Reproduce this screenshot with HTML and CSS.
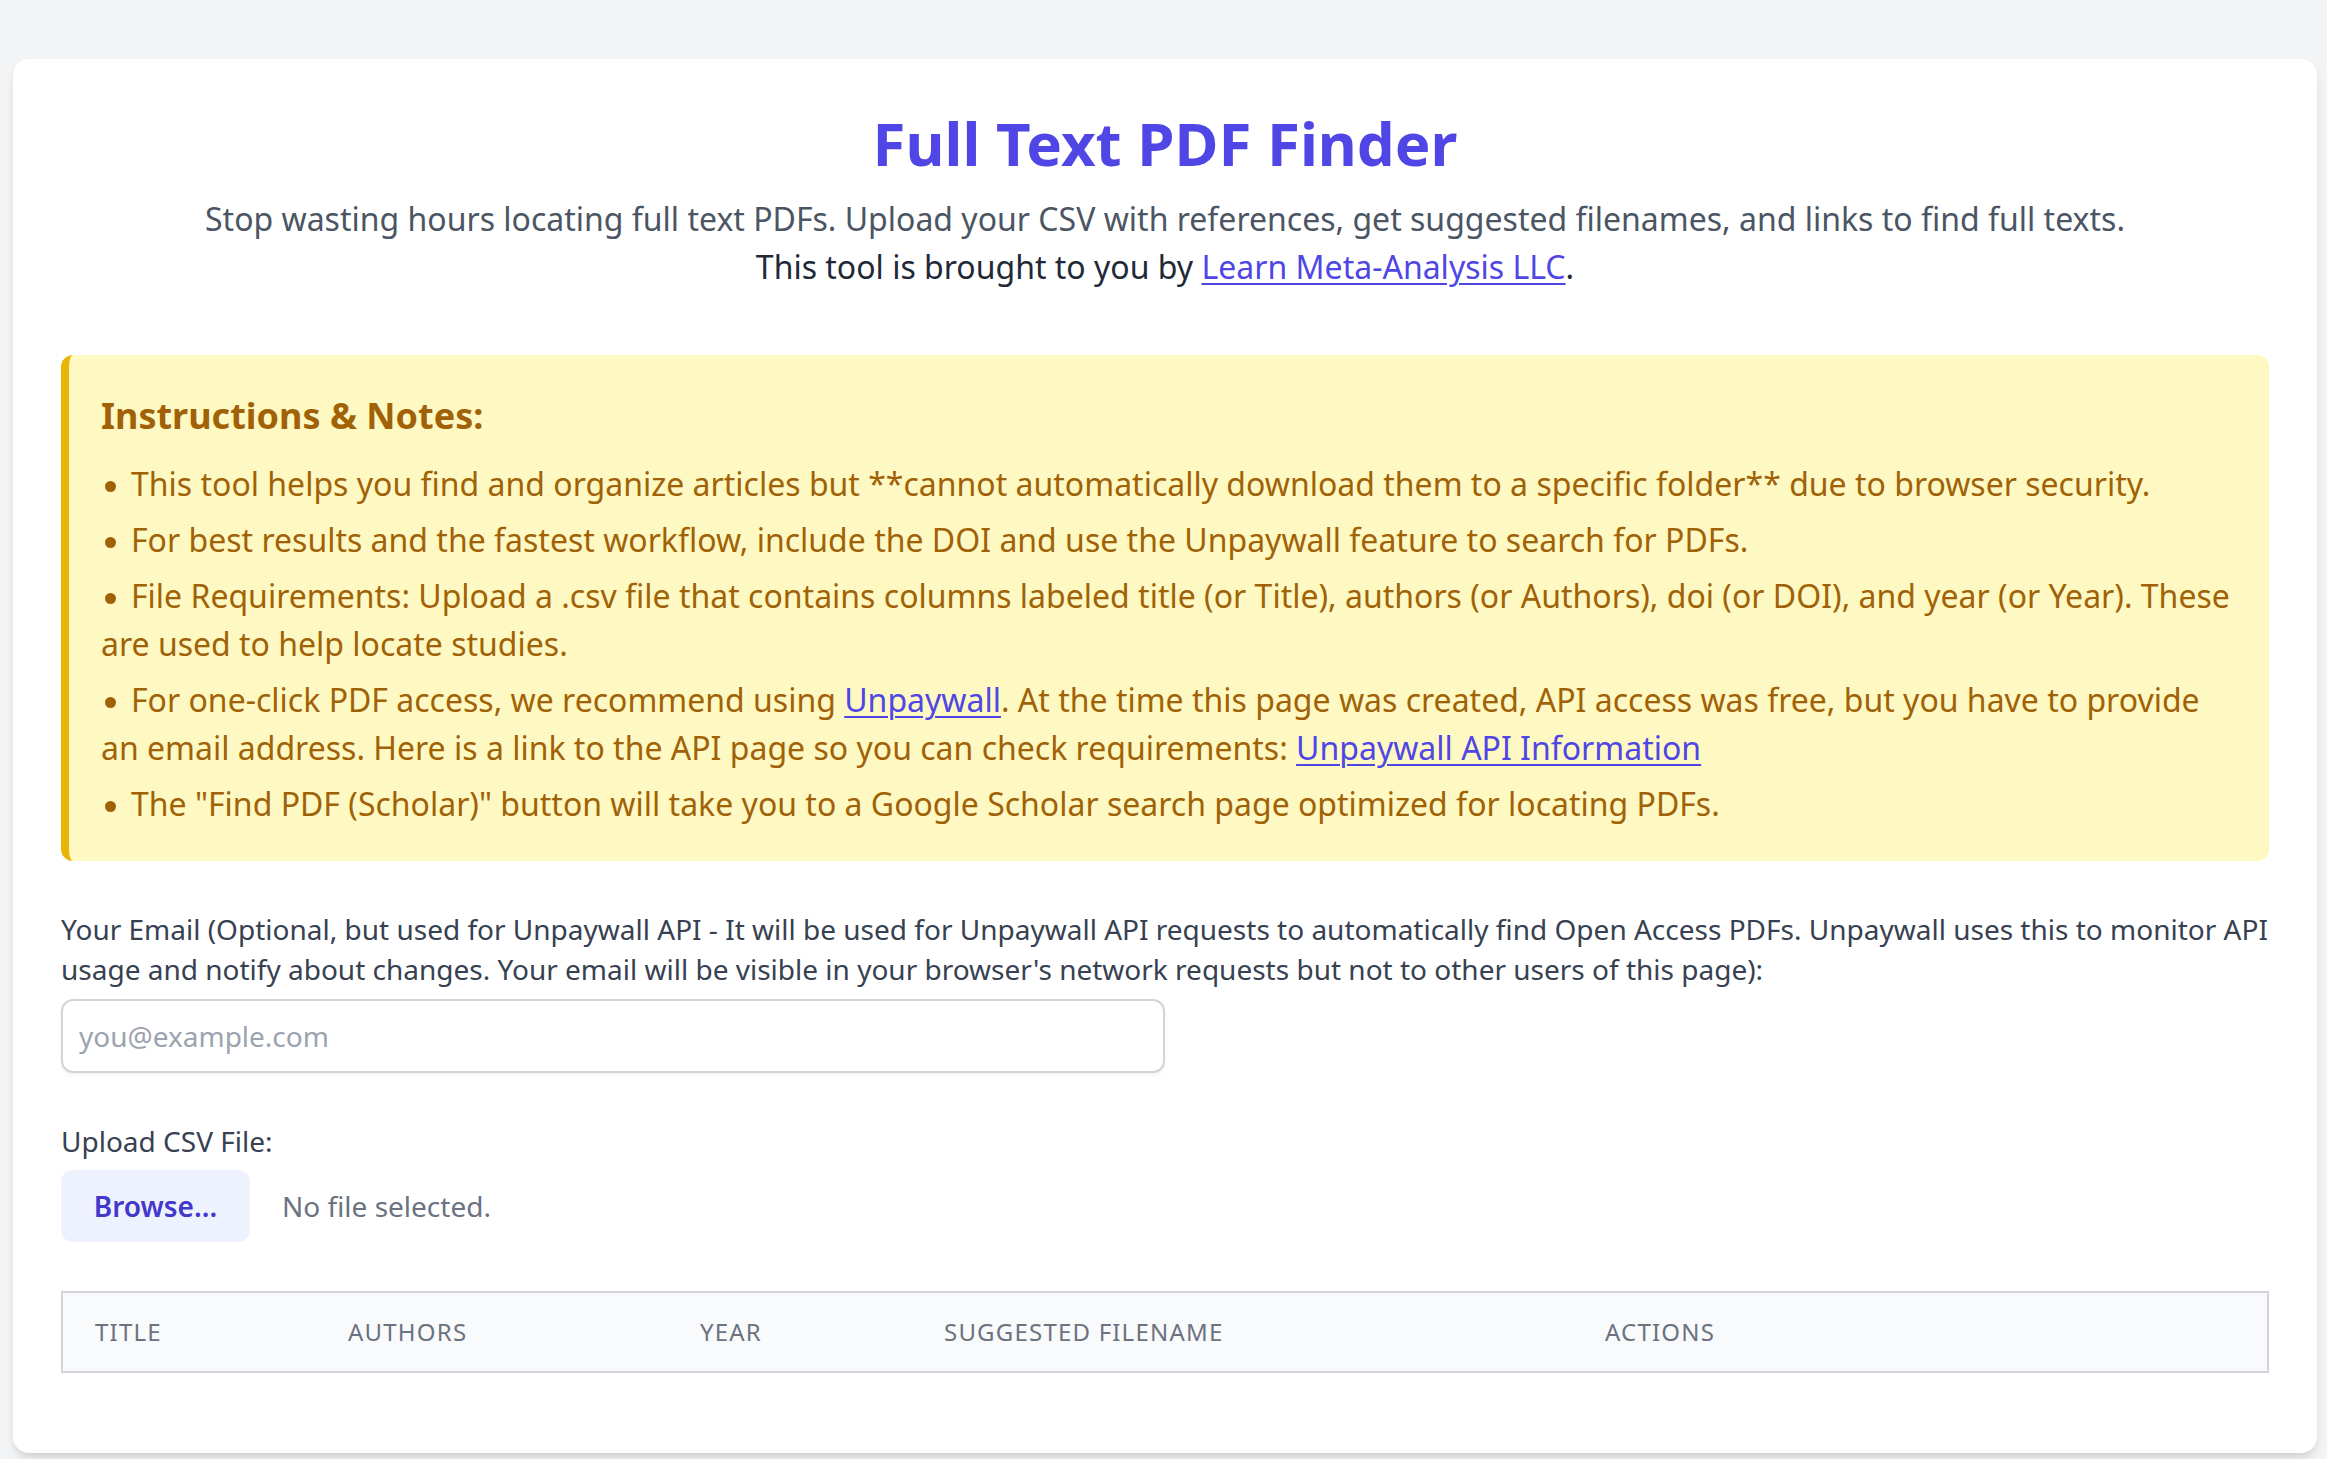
FILE: index.html
```html
<!DOCTYPE html>
<html lang="en">
<head>
<meta charset="utf-8">
<title>Full Text PDF Finder</title>
<link rel="stylesheet" href="styles.css">
</head>
<body>
<div class="card">
  <h1 class="title">Full Text PDF Finder</h1>
  <p class="subtitle">Stop wasting hours locating full text PDFs. Upload your CSV with references, get suggested filenames, and links to find full texts.</p>
  <p class="byline">This tool is brought to you by <a href="#" class="link">Learn Meta-Analysis LLC</a>.</p>

  <div class="notes">
    <h2 class="notes-title">Instructions &amp; Notes:</h2>
    <ul class="notes-list">
      <li>This tool helps you find and organize articles but **cannot automatically download them to a specific folder** due to browser security.</li>
      <li>For best results and the fastest workflow, include the DOI and use the Unpaywall feature to search for PDFs.</li>
      <li>File Requirements: Upload a .csv file that contains columns labeled title (or Title), authors (or Authors), doi (or DOI), and year (or Year). These are used to help locate studies.</li>
      <li>For one-click PDF access, we recommend using <a href="#" class="link">Unpaywall</a>. At the time this page was created, API access was free, but you have to provide an email address. Here is a link to the API page so you can check requirements: <a href="#" class="link">Unpaywall API Information</a></li>
      <li>The "Find PDF (Scholar)" button will take you to a Google Scholar search page optimized for locating PDFs.</li>
    </ul>
  </div>

  <label class="field-label email-label" for="email">Your Email (Optional, but used for Unpaywall API - It will be used for Unpaywall API requests to automatically find Open Access PDFs. Unpaywall uses this to monitor API usage and notify about changes. Your email will be visible in your browser's network requests but not to other users of this page):</label>
  <input class="email-input" id="email" type="email" placeholder="you@example.com">

  <div class="field-label upload-label">Upload CSV File:</div>
  <div class="file-row">
    <span class="browse-btn">Browse...</span>
    <span class="file-status">No file selected.</span>
  </div>

  <table class="results">
    <colgroup>
      <col class="c-title">
      <col class="c-authors">
      <col class="c-year">
      <col class="c-file">
      <col class="c-actions">
    </colgroup>
    <thead>
      <tr>
        <th>Title</th>
        <th>Authors</th>
        <th>Year</th>
        <th>Suggested Filename</th>
        <th>Actions</th>
      </tr>
    </thead>
    <tbody></tbody>
  </table>
</div>
</body>
</html>
```

FILE: styles.css
```css
html, body {
  margin: 0;
  padding: 0;
  background: #f3f4f6;
  font-family: "Noto Sans", "Open Sans", sans-serif;
  color: #1f2937;
}

body {
  padding: 59px 10px 6px 13px;
}

.card {
  background: #ffffff;
  border-radius: 16px;
  box-shadow: 0 8px 12px -2px rgba(0, 0, 0, 0.1), 0 4px 8px -4px rgba(0, 0, 0, 0.1);
  padding: 48px 48px 80px 48px;
}

.title {
  margin: 0 0 16px 0;
  text-align: center;
  font-size: 60px;
  line-height: 72px;
  font-weight: 700;
  color: #4f46e5;
}

.subtitle {
  margin: 0;
  text-align: center;
  font-size: 32px;
  line-height: 48px;
  color: #4b5563;
}

.byline {
  margin: 0 0 64px 0;
  text-align: center;
  font-size: 32px;
  line-height: 48px;
  color: #1f2937;
}

.link {
  color: #4f46e5;
  text-decoration: underline;
  text-decoration-thickness: 2px;
  text-underline-offset: 4px;
}

.notes {
  background: #fef9c3;
  border-left: 8px solid #eab308;
  border-radius: 12px;
  padding: 33px 32px 33px 32px;
  margin-bottom: 48px;
  color: #a16207;
}

.notes-title {
  margin: 0 0 16px 0;
  font-size: 36px;
  line-height: 56px;
  font-weight: 700;
  color: #a16207;
}

.notes-list {
  margin: 0;
  padding: 0;
  list-style: none;
  display: flex;
  flex-direction: column;
  gap: 8px;
  font-size: 32px;
  line-height: 48px;
}

.notes-list li::before {
  content: "";
  display: inline-block;
  width: 11px;
  height: 11px;
  border-radius: 50%;
  background: currentColor;
  margin: 0 15px 0 4px;
  vertical-align: 4px;
}

.field-label {
  display: block;
  font-size: 28px;
  line-height: 40px;
  color: #374151;
  font-weight: 400;
}

.email-label {
  margin-bottom: 10px;
}

.email-input {
  display: block;
  box-sizing: border-box;
  width: 1104px;
  height: 74px;
  margin: 0 0 48px 0;
  padding: 0 16px;
  border: 2px solid #d1d5db;
  border-radius: 12px;
  box-shadow: 0 2px 4px rgba(0, 0, 0, 0.05);
  font-family: inherit;
  font-size: 28px;
  color: #111827;
  background: #ffffff;
  outline: none;
}

.email-input::placeholder {
  color: #9ca3af;
}

.upload-label {
  margin-bottom: 9px;
}

.file-row {
  display: flex;
  align-items: center;
  margin-bottom: 49px;
}

.browse-btn {
  box-sizing: border-box;
  height: 72px;
  width: 189px;
  display: flex;
  align-items: center;
  justify-content: center;
  background: #eef2ff;
  color: #4338ca;
  border-radius: 12px;
  font-size: 28px;
  font-weight: 600;
  margin-right: 32px;
}

.file-status {
  font-size: 28px;
  color: #6b7280;
}

.results {
  width: 100%;
  table-layout: fixed;
  border-collapse: collapse;
  border: 2px solid #d1d5db;
}

.c-title { width: 254px; }
.c-authors { width: 352px; }
.c-year { width: 244px; }
.c-file { width: 661px; }
.c-actions { width: auto; }

.results thead {
  background: #f9fafb;
}

.results th {
  text-align: left;
  padding: 24px 32px;
  font-size: 24px;
  line-height: 30px;
  font-weight: 400;
  text-transform: uppercase;
  letter-spacing: 1.2px;
  color: #6b7280;
}
```
